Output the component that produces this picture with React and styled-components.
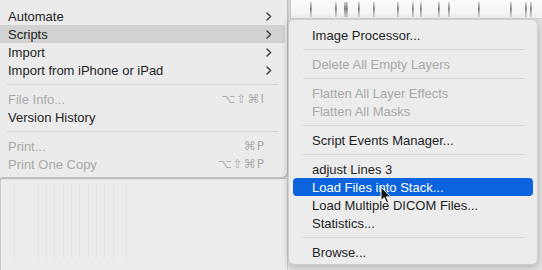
import React from 'react'
import styled, { createGlobalStyle } from 'styled-components'

const GlobalStyle = createGlobalStyle`
  html, body {
    margin: 0;
    padding: 0;
    background: #e7e7e7;
  }
  body {
    font-family: "Liberation Sans", "Helvetica Neue", Arial, sans-serif;
    -webkit-font-smoothing: antialiased;
  }
`

const mainItems = [
  { label: 'Automate', sub: true },
  { label: 'Scripts', sub: true, open: true },
  { label: 'Import', sub: true },
  { label: 'Import from iPhone or iPad', sub: true },
  { sep: true },
  { label: 'File Info...', keys: '⌥⇧⌘I', disabled: true },
  { label: 'Version History' },
  { sep: true },
  { label: 'Print...', keys: '⌘P', disabled: true },
  { label: 'Print One Copy', keys: '⌥⇧⌘P', disabled: true },
]

const scriptItems = [
  { label: 'Image Processor...' },
  { sep: true },
  { label: 'Delete All Empty Layers', disabled: true },
  { sep: true },
  { label: 'Flatten All Layer Effects', disabled: true },
  { label: 'Flatten All Masks', disabled: true },
  { sep: true },
  { label: 'Script Events Manager...' },
  { sep: true },
  { label: 'adjust Lines 3' },
  { label: 'Load Files into Stack...', active: true },
  { label: 'Load Multiple DICOM Files...' },
  { label: 'Statistics...' },
  { sep: true },
  { label: 'Browse...' },
]

// tick positions relative to the ruler's left edge (x = 291)
const rulerTicks = [19, 44, 53, 55, 67, 82, 106, 121, 129, 147, 157, 187, 219, 234, 239]
const panelLines = [13, 37, 45, 53, 62, 70, 78, 87, 95, 103, 112, 125]

function Chevron() {
  return (
    <svg width="6" height="9" viewBox="0 0 6 9">
      <path d="M1 1 L4.6 4.5 L1 8" fill="none" stroke="#3a3a3a" strokeWidth="1.4" strokeLinecap="round" strokeLinejoin="round" />
    </svg>
  )
}

function Cursor() {
  return (
    <svg width="12" height="18" viewBox="0 0 12 18">
      <path d="M1 1 L1 14.5 L4.2 11.6 L6.6 16.8 L8.6 15.9 L6.3 10.9 L10.6 10.9 Z" fill="#111" stroke="#fff" strokeWidth="1" strokeLinejoin="round" />
    </svg>
  )
}

function App() {
  return (
    <>
      <GlobalStyle />
      <Page>
        <Backdrop>
          <LeftColumn>
            <Covered />
            <Panel>
              <svg width="140" height="80" viewBox="0 0 140 80">
                {panelLines.map((x, i) => (
                  <rect key={i} x={x} y="4" width="1" height="76" fill="#e2e2e2" />
                ))}
              </svg>
            </Panel>
          </LeftColumn>
          <RightColumn>
            <Ruler>
              <svg width="251" height="18" viewBox="0 0 251 18">
                <defs>
                  <linearGradient id="tick" x1="0" y1="0" x2="0" y2="1">
                    <stop offset="0" stopColor="#9a9a9a" stopOpacity="0.4" />
                    <stop offset="0.45" stopColor="#7c7c7c" stopOpacity="1" />
                    <stop offset="1" stopColor="#b0b0b0" stopOpacity="0.45" />
                  </linearGradient>
                </defs>
                {rulerTicks.map((x, i) => (
                  <rect key={i} x={x} y="2" width={i === 2 ? 2.5 : 1.8} height="15" fill="url(#tick)" />
                ))}
              </svg>
            </Ruler>
            <Rest />
          </RightColumn>
        </Backdrop>

        <MainMenu>
          {mainItems.map((it, i) =>
            it.sep ? (
              <Separator key={i} $left={7} $right={9} />
            ) : (
              <MainRow key={i} $open={it.open} $disabled={it.disabled}>
                <span>{it.label}</span>
                {it.sub && <Chevron />}
                {it.keys && <Keys>{it.keys}</Keys>}
              </MainRow>
            )
          )}
        </MainMenu>

        <SubMenu>
          {scriptItems.map((it, i) =>
            it.sep ? (
              <Separator key={i} $left={10} $right={9} />
            ) : (
              <SubRow key={i} $active={it.active} $disabled={it.disabled}>
                {it.label}
              </SubRow>
            )
          )}
        </SubMenu>

        <Pointer>
          <Cursor />
        </Pointer>
      </Page>
    </>
  )
}

export default App

const Page = styled.div`
  position: relative;
  width: 542px;
  height: 270px;
  overflow: hidden;
`

const Backdrop = styled.div`
  display: flex;
  width: 100%;
  height: 100%;
`

const LeftColumn = styled.div`
  display: flex;
  flex-direction: column;
  width: 288px;
  flex-shrink: 0;
`

const Covered = styled.div`
  height: 178px;
  background: #e9e9e9;
`

const Panel = styled.div`
  flex: 1;
  background: #ececec;
  border-left: 1px solid #c9c9c9;
  border-right: 1px solid #cdcdcd;
  border-top: 1px solid #cfcfcf;
  svg {
    display: block;
  }
`

const RightColumn = styled.div`
  flex: 1;
  display: flex;
  flex-direction: column;
  padding-left: 2px;
  background: #e4e4e4;
`

const Ruler = styled.div`
  height: 18px;
  flex-shrink: 0;
  background: linear-gradient(#fbfbfb, #f1f1f1);
  border-left: 1px solid #c8c8c8;
  border-bottom: 1px solid #d6d6d6;
  svg {
    display: block;
  }
`

const Rest = styled.div`
  flex: 1;
  background: #e2e2e2;
`

const MainMenu = styled.div`
  position: absolute;
  top: -6px;
  left: 0;
  width: 287px;
  padding: 13px 0 4px;
  background: #ebebeb;
  box-shadow: 1px 1px 3px rgba(0, 0, 0, 0.28);
  border-radius: 0 0 5px 0;
`

const MainRow = styled.div`
  display: flex;
  align-items: center;
  justify-content: space-between;
  height: 18px;
  padding: 0 13px 0 8px;
  margin-right: 2px;
  font-size: 13px;
  color: ${(p) => (p.$disabled ? '#a9a9a9' : '#1e1e1e')};
  background: ${(p) => (p.$open ? '#d2d2d2' : 'transparent')};
  svg {
    display: block;
  }
`

const Keys = styled.span`
  font-family: "DejaVu Sans", "Liberation Sans", sans-serif;
  font-size: 12px;
  letter-spacing: 1px;
  color: #ababab;
  margin-right: 7px;
`

const Separator = styled.div`
  height: 1px;
  margin: 5px ${(p) => p.$right}px 5px ${(p) => p.$left}px;
  background: #d5d5d5;
`

const SubMenu = styled.div`
  position: absolute;
  top: 19px;
  left: 288px;
  width: 250px;
  box-sizing: border-box;
  padding: 6px 4px 3px;
  background: #ececec;
  border-radius: 6px;
  border: 0.5px solid rgba(0, 0, 0, 0.12);
  box-shadow: 0 2px 7px rgba(0, 0, 0, 0.22);
`

const SubRow = styled.div`
  display: flex;
  align-items: center;
  height: 18px;
  padding-left: 19px;
  font-size: 13px;
  border-radius: 4px;
  color: ${(p) => (p.$active ? '#ffffff' : p.$disabled ? '#a9a9a9' : '#1e1e1e')};
  background: ${(p) => (p.$active ? '#0b63dd' : 'transparent')};
`

const Pointer = styled.div`
  position: absolute;
  top: 186px;
  left: 380px;
  svg {
    display: block;
  }
`
